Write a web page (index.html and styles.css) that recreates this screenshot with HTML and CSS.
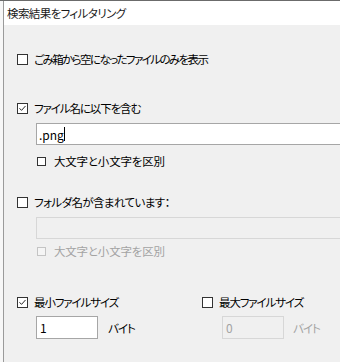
FILE: index.html
```html
<!DOCTYPE html>
<html lang="ja">
<head>
<meta charset="utf-8">
<link rel="stylesheet" href="styles.css">
</head>
<body>
<div class="window">
  <div class="leftbar"></div>
  <div class="main">
    <div class="title">検索結果をフィルタリング</div>
    <div class="content">
      <div class="row r1">
        <span class="cb"></span>
        <span class="label kana-heavy">ごみ箱から空になったファイルのみを表示</span>
      </div>

      <div class="row r2">
        <span class="cb checked"><svg viewBox="0 0 11 11"><polyline points="1.8,5.2 4.3,7.8 9.2,2.4" /></svg></span>
        <span class="label kana-mid">ファイル名に以下を含む</span>
      </div>
      <div class="field wide f1"><span class="val">.png</span><span class="caret"></span></div>
      <div class="row sub s1">
        <span class="cb small"></span>
        <span class="label kanji-heavy">大文字と小文字を区別</span>
      </div>

      <div class="row r3">
        <span class="cb"></span>
        <span class="label">フォルダ名が含まれています：</span>
      </div>
      <div class="field wide disabled f2"></div>
      <div class="row sub s2 dis">
        <span class="cb small"></span>
        <span class="label kanji-heavy">大文字と小文字を区別</span>
      </div>

      <div class="sizes">
        <div class="col">
          <div class="row">
            <span class="cb checked"><svg viewBox="0 0 11 11"><polyline points="1.8,5.2 4.3,7.8 9.2,2.4" /></svg></span>
            <span class="label kana-mid">最小ファイルサイズ</span>
          </div>
          <div class="sizeline">
            <div class="field num"><span class="val">1</span></div>
            <span class="unit">バイト</span>
          </div>
        </div>
        <div class="col">
          <div class="row">
            <span class="cb"></span>
            <span class="label kana-mid">最大ファイルサイズ</span>
          </div>
          <div class="sizeline dis">
            <div class="field num disabled"><span class="val">0</span></div>
            <span class="unit">バイト</span>
          </div>
        </div>
      </div>
    </div>
  </div>
</div>
</body>
</html>
```

FILE: styles.css
```css
html, body {
  margin: 0;
  padding: 0;
  width: 340px;
  height: 362px;
  overflow: hidden;
  background: #f0f0f0;
}
body {
  font-family: "Noto Sans CJK JP", "Noto Sans", sans-serif;
  font-size: 11.5px;
  letter-spacing: -0.6px;
  font-feature-settings: "palt";
  color: #000;
}
.window {
  display: flex;
  height: 362px;
  border-top: 1px solid #6b6b6b;
  box-sizing: border-box;
}
.leftbar {
  width: 3px;
  flex: none;
  background: #f7f7f7;
  border-right: 1px solid #9a9a9a;
}
.main {
  flex: 1;
  display: flex;
  flex-direction: column;
  min-width: 0;
}
.title {
  height: 24px;
  background: #fff;
  padding-left: 3px;
  line-height: 24px;
  color: #1a1a1a;
  white-space: nowrap;
}
.content {
  flex: 1;
  padding-left: 13px;
  display: flex;
  flex-direction: column;
  align-items: flex-start;
}
.row {
  display: flex;
  align-items: center;
  height: 16px;
  white-space: nowrap;
}
.cb {
  width: 11px;
  height: 11px;
  box-sizing: border-box;
  border: 1px solid #333;
  background: #fff;
  margin-right: 6px;
  flex: none;
  display: flex;
}
.cb svg {
  width: 100%;
  height: 100%;
}
.cb polyline {
  fill: none;
  stroke: #222;
  stroke-width: 1.2;
}
.cb.small {
  width: 9px;
  height: 9px;
  margin-right: 8px;
}
.label {
  line-height: 16px;
}
.kana-heavy { letter-spacing: -1.6px; }
.kana-mid { letter-spacing: -1.1px; }
.kanji-heavy { letter-spacing: -0.2px; }
.r1 { margin-top: 26px; }
.r2 { margin-top: 33px; }
.r3 { margin-top: 25px; }
.sub { margin-left: 20px; }
.s1 { margin-top: 8px; }
.s2 { margin-top: 4px; }
.dis { color: #a3a3a3; }
.dis .cb { border-color: #c4c4c4; background: #f5f5f5; }

.field {
  box-sizing: border-box;
  height: 22px;
  background: #fff;
  border: 1px solid #a6a6a6;
  display: flex;
  align-items: center;
  padding-left: 2px;
  font-size: 12px;
  letter-spacing: 0;
}
.field.wide {
  width: 304px;
  margin-left: 19px;
  border-right: none;
}
.f1 { margin-top: 7px; }
.f2 { margin-top: 7px; }
.field.disabled {
  background: #f0f0f0;
  border-color: #d7d7d7;
  color: #a3a3a3;
}
.caret {
  width: 1px;
  height: 14px;
  background: #000;
}
.sizes {
  display: flex;
  margin-top: 35px;
}
.col {
  width: 185px;
  display: flex;
  flex-direction: column;
  align-items: flex-start;
}
.col + .col {
  width: 138px;
}
.sizeline {
  display: flex;
  align-items: center;
  margin-top: 6px;
  margin-left: 19px;
}
.col + .col .sizeline { margin-left: 20px; }
.field.num {
  width: 62px;
  height: 23px;
  padding-left: 3px;
}
.unit {
  margin-left: 10px;
  letter-spacing: -1px;
}
.sizeline.dis .unit { margin-left: 9px; }
```
